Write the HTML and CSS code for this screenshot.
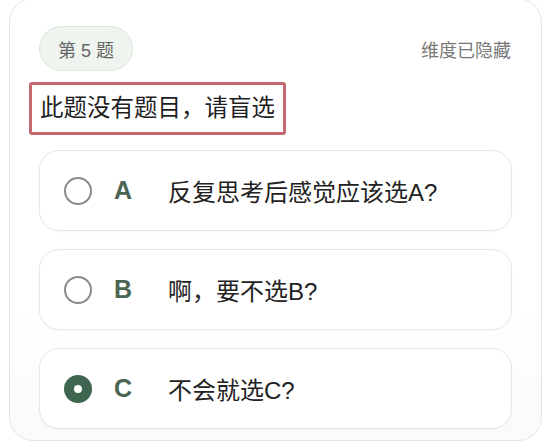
FILE: index.html
```html
<!DOCTYPE html>
<html lang="zh">
<head>
<meta charset="utf-8">
<title>第 5 题</title>
<link rel="stylesheet" href="styles.css">
</head>
<body>
<div class="page">
  <div class="card">
    <div class="header">
      <span class="badge">第 5 题</span>
      <span class="hint">维度已隐藏</span>
    </div>
    <div class="title">此题没有题目，请盲选</div>
    <div class="options">
      <div class="option">
        <span class="radio"></span>
        <span class="letter">A</span>
        <span class="text">反复思考后感觉应该选A?</span>
      </div>
      <div class="option">
        <span class="radio"></span>
        <span class="letter">B</span>
        <span class="text">啊，要不选B?</span>
      </div>
      <div class="option">
        <span class="radio checked"></span>
        <span class="letter">C</span>
        <span class="text">不会就选C?</span>
      </div>
    </div>
  </div>
</div>
</body>
</html>
```
FILE: styles.css
```css
html, body {
  margin: 0;
  padding: 0;
  background: #ffffff;
}
body {
  font-family: "Liberation Sans", "Noto Sans CJK SC", sans-serif;
  color: #222;
  overflow: hidden;
}
.page {
  padding: 0 10px 0 9px;
}
.card {
  margin-top: -2px;
  box-sizing: border-box;
  height: 443px;
  border: 1.5px solid #e4e6e4;
  border-radius: 24px;
  padding: 27px 29px 10px 29px;
  background: linear-gradient(to bottom, #ffffff 0%, #ffffff 70%, #f8fbf8 100%);
}
.header {
  display: flex;
  justify-content: space-between;
  align-items: center;
  height: 45px;
}
.badge {
  box-sizing: border-box;
  height: 45px;
  display: inline-flex;
  align-items: center;
  padding: 0 18px;
  border-radius: 23px;
  background: #eef4ee;
  border: 1px solid #dce6dc;
  color: #666;
  font-size: 18px;
}
.hint {
  color: #777;
  font-size: 18px;
  margin-right: 1px;
}
.title {
  display: inline-block;
  margin-top: 11px;
  margin-left: -10px;
  box-sizing: border-box;
  height: 53px;
  line-height: 47px;
  padding: 0 8px;
  border: 3px solid #c4696f;
  border-radius: 3px;
  font-size: 23.5px;
  color: #1e1e1e;
}
.options {
  margin-top: 15px;
  display: flex;
  flex-direction: column;
  gap: 18px;
}
.option {
  box-sizing: border-box;
  height: 81px;
  display: flex;
  align-items: center;
  padding-left: 24px;
  border: 1px solid #e6e7e6;
  border-radius: 20px;
  background: #fff;
  box-shadow: 0 1px 2px rgba(0, 0, 0, 0.03);
}
.radio {
  box-sizing: border-box;
  width: 28px;
  height: 28px;
  border-radius: 50%;
  border: 2.5px solid #8a8a8a;
  margin-right: 22px;
  flex: none;
}
.radio.checked {
  border: 10px solid #3f6650;
  background: #ffffff;
}
.letter {
  width: 54px;
  flex: none;
  font-weight: 700;
  font-size: 25px;
  color: #4a6552;
}
.text {
  font-size: 24px;
  color: #222;
}
```
